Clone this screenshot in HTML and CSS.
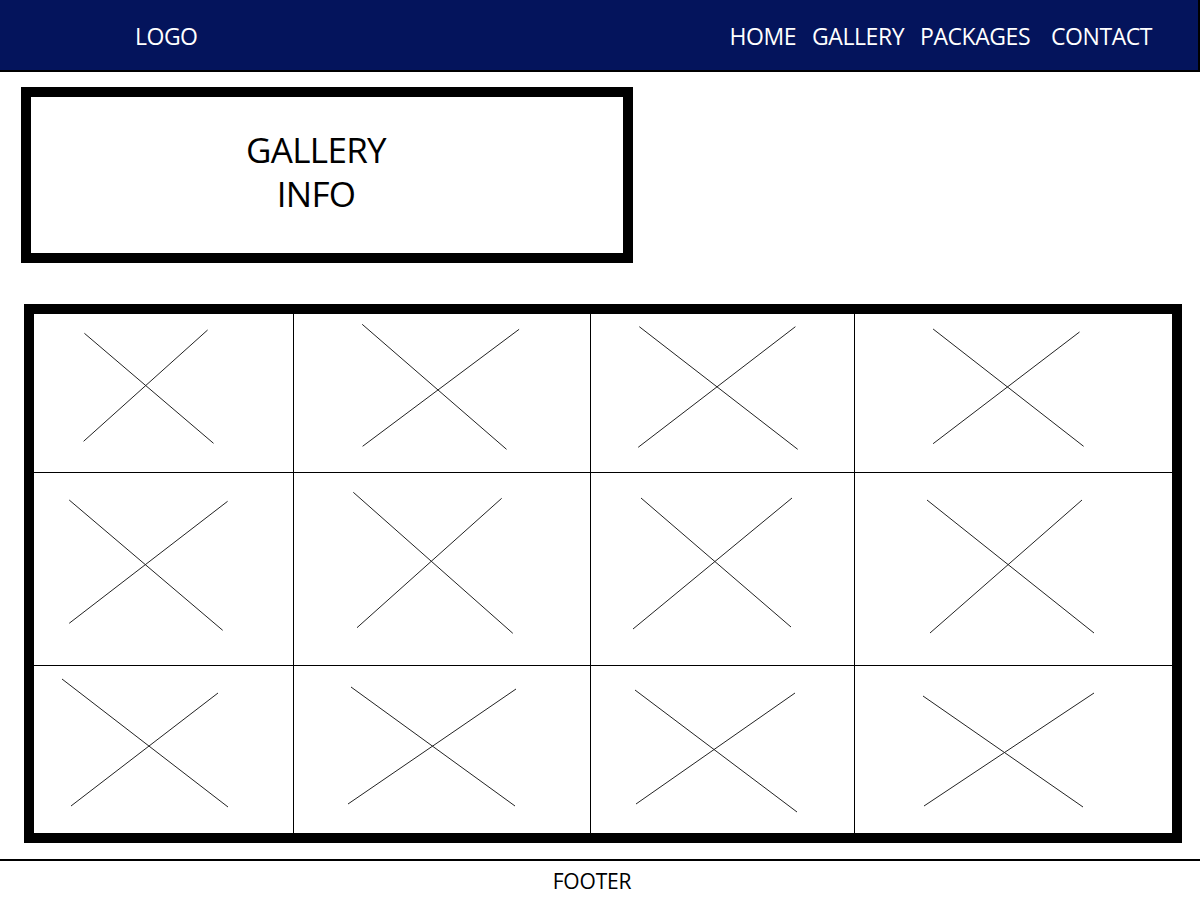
FILE: index.html
```html
<!DOCTYPE html>
<html lang="en">
<head>
  <meta charset="UTF-8">
  <meta name="viewport" content="width=device-width, initial-scale=1.0">
  <title>Gallery</title>
  <link rel="stylesheet" href="styles.css">
</head>
<body>
  <header class="topbar">
    <div class="logo">LOGO</div>
    <nav class="nav">
      <a href="#" class="nav-link">HOME</a>
      <a href="#" class="nav-link">GALLERY</a>
      <a href="#" class="nav-link">PACKAGES</a>
      <a href="#" class="nav-link contact">CONTACT</a>
    </nav>
  </header>

  <section class="info-box">
    <h1 class="info-title">GALLERY<br>INFO</h1>
  </section>

  <section class="gallery">
    <div class="grid">
      <!-- row 1 -->
      <div class="cell"><svg width="259" height="158"><line x1="50.4" y1="19.3" x2="179.5" y2="129.3"/><line x1="173.6" y1="16" x2="49.6" y2="127.3"/></svg></div>
      <div class="cell"><svg width="296" height="158"><line x1="68.2" y1="10.3" x2="212.5" y2="135.3"/><line x1="225.1" y1="15.3" x2="68.6" y2="132.3"/></svg></div>
      <div class="cell"><svg width="263" height="158"><line x1="48.3" y1="12.7" x2="206.7" y2="135.3"/><line x1="204.4" y1="12.7" x2="47.2" y2="133.3"/></svg></div>
      <div class="cell"><svg width="317" height="158"><line x1="78.1" y1="15" x2="228.6" y2="132.3"/><line x1="224.5" y1="18" x2="78.1" y2="129.7"/></svg></div>
      <!-- row 2 -->
      <div class="cell"><svg width="259" height="192"><line x1="35.2" y1="27" x2="188.7" y2="157.3"/><line x1="193.6" y1="28.3" x2="35.2" y2="150.3"/></svg></div>
      <div class="cell"><svg width="296" height="192"><line x1="59.3" y1="19.3" x2="218.8" y2="160.3"/><line x1="207.7" y1="25.3" x2="63" y2="154.7"/></svg></div>
      <div class="cell"><svg width="263" height="192"><line x1="50" y1="25" x2="200" y2="154"/><line x1="201" y1="25" x2="42" y2="156"/></svg></div>
      <div class="cell"><svg width="317" height="192"><line x1="72" y1="27" x2="239" y2="160"/><line x1="227" y1="27" x2="75" y2="160"/></svg></div>
      <!-- row 3 -->
      <div class="cell"><svg width="259" height="167"><line x1="28" y1="13" x2="194" y2="141"/><line x1="184" y1="27" x2="37" y2="140"/></svg></div>
      <div class="cell"><svg width="296" height="167"><line x1="57" y1="21" x2="221" y2="140"/><line x1="222" y1="23" x2="54" y2="138"/></svg></div>
      <div class="cell"><svg width="263" height="167"><line x1="44" y1="24" x2="206" y2="146"/><line x1="204" y1="27" x2="45" y2="138"/></svg></div>
      <div class="cell"><svg width="317" height="167"><line x1="68" y1="30" x2="228" y2="141"/><line x1="239" y1="27" x2="69" y2="140"/></svg></div>
    </div>
  </section>

  <footer class="footer">FOOTER</footer>
</body>
</html>
```

FILE: styles.css
```css
body {
  margin: 0;
  font-family: 'Open Sans', 'Noto Sans', sans-serif;
  background: #fff;
  color: #000;
}
.topbar {
  height: 68px;
  background-color: #04145c; /* navy bar */
  border-bottom: 2px solid #000;
  border-right: 2px solid #000;
  display: flex;
  justify-content: space-between;
  align-items: center;
  padding: 2px 46px 0 135px;
}
.logo {
  color: #fff;
  font-size: 23px;
  letter-spacing: -0.5px;
}
.nav {
  display: flex;
  gap: 16px;
}
.nav-link {
  color: #fff;
  text-decoration: none;
  font-size: 23px;
  letter-spacing: -0.45px;
}
.contact {
  margin-left: 5px;
}
.info-box {
  margin: 15px 0 0 21px;
  width: 612px;
  height: 176px;
  box-sizing: border-box;
  border: 10px solid #000;
  display: flex;
  align-items: center;
  justify-content: center;
  padding: 0 22px 7px 0;
}
.info-title {
  margin: 0;
  font-weight: normal;
  font-size: 35px;
  line-height: 44px;
  letter-spacing: -0.7px;
  text-align: center;
}
.gallery {
  margin: 41px 0 0 24px;
  width: 1158px;
  height: 539px;
  box-sizing: border-box;
  border: 10px solid #000;
}
.grid {
  display: grid;
  grid-template-columns: 259px 296px 263px 317px;
  grid-template-rows: 158px 192px 167px;
  gap: 1px;
  background: #000;
}
.cell {
  background: #fff;
}
.cell svg {
  display: block;
}
.cell line {
  stroke: #222;
  stroke-width: 1;
}
.footer {
  margin-top: 16px;
  border-top: 2px solid #000;
  text-align: center;
  padding: 6px 16px 0 0;
  font-size: 21px;
  letter-spacing: -0.2px;
}
```
